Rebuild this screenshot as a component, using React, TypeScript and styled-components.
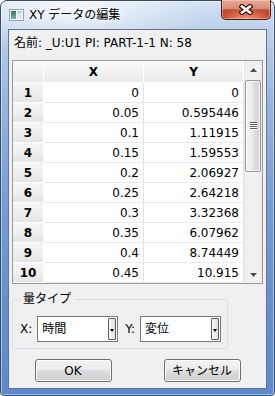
import { Fragment } from "react";
import styled, { createGlobalStyle } from "styled-components";

const UI_FONT = `"DejaVu Sans", "Noto Sans CJK JP", sans-serif`;

const GlobalStyle = createGlobalStyle`
  html, body {
    margin: 0;
    padding: 0;
  }
  body {
    width: 275px;
    height: 396px;
    overflow: hidden;
    background: #ffffff;
    font-family: ${UI_FONT};
    font-size: 12px;
    color: #000;
  }
`;

type Row = { no: string; x: string; y: string };

const rows: Row[] = [
  { no: "1", x: "0", y: "0" },
  { no: "2", x: "0.05", y: "0.595446" },
  { no: "3", x: "0.1", y: "1.11915" },
  { no: "4", x: "0.15", y: "1.59553" },
  { no: "5", x: "0.2", y: "2.06927" },
  { no: "6", x: "0.25", y: "2.64218" },
  { no: "7", x: "0.3", y: "3.32368" },
  { no: "8", x: "0.35", y: "6.07962" },
  { no: "9", x: "0.4", y: "8.74449" },
  { no: "10", x: "0.45", y: "10.915" }
];

const Window = styled.div`
  box-sizing: border-box;
  width: 275px;
  height: 396px;
  display: flex;
  flex-direction: column;
  padding: 0 7px 6px 7px;
  border: 1px solid #3b4b62;
  border-radius: 7px 7px 4px 4px;
  background:
    radial-gradient(ellipse 190px 60px at 70px 8px, rgba(255, 255, 255, 0.8), rgba(255, 255, 255, 0) 70%),
    linear-gradient(to bottom, #d3e2f4 0px, #bcd1ec 28px, #9ab9e3 90px, #7aa2da 180px, #6592d4 280px, #5b89d0 396px);
  box-shadow: inset 0 0 0 1px rgba(255, 255, 255, 0.45);
`;

const TitleBar = styled.div`
  height: 28px;
  display: flex;
  align-items: flex-start;
`;

const TitleIcon = styled.svg`
  margin: 8px 0 0 1px;
  flex: none;
`;

const TitleText = styled.span`
  margin: 6px 0 0 5px;
  line-height: 16px;
  font-size: 12px;
  color: #000;
  white-space: nowrap;
  text-shadow: 0 0 6px rgba(255, 255, 255, 0.95), 0 0 3px rgba(255, 255, 255, 0.9);
`;

const CloseButton = styled.div`
  box-sizing: border-box;
  margin: -1px -4px 0 auto;
  width: 50px;
  height: 20px;
  display: flex;
  align-items: center;
  justify-content: center;
  border: 1px solid #4a1c14;
  border-top: none;
  border-radius: 0 0 5px 5px;
  background:
    radial-gradient(ellipse 60% 55% at 50% 100%, rgba(255, 170, 130, 0.85), rgba(255, 170, 130, 0) 100%),
    linear-gradient(to bottom, #e6aa9c 0%, #d98b79 45%, #c54a33 52%, #b6361f 100%);
  box-shadow: inset 0 0 0 1px rgba(255, 215, 200, 0.45);
`;

const Client = styled.div`
  flex: 1;
  display: flex;
  flex-direction: column;
  padding: 0 3px;
  background: #f0f0f0;
  border: 1px solid rgba(30, 48, 78, 0.65);
`;

const NameRow = styled.div`
  box-sizing: border-box;
  height: 30px;
  padding: 0 0 4px 2px;
  display: flex;
  align-items: center;
  line-height: 16px;
  white-space: nowrap;
`;

const Table = styled.div`
  box-sizing: border-box;
  height: 224px;
  display: flex;
  border: 1px solid #9a9a9a;
  background: #ffffff;
  overflow: hidden;
`;

const Grid = styled.div`
  flex: 1;
  display: grid;
  grid-template-columns: 31px 100px 100px;
  grid-template-rows: 22px;
  grid-auto-rows: 20px;
  align-content: start;
  overflow: hidden;
`;

const HeadCell = styled.div`
  box-sizing: border-box;
  display: flex;
  align-items: center;
  justify-content: center;
  font-weight: bold;
  border-right: 1px solid #ffffff;
  border-bottom: 1px solid #ffffff;
  background: linear-gradient(to bottom, #fbfbfb 0%, #f1f1f1 55%, #e9e9e9 100%);
`;

const RowHead = styled.div`
  box-sizing: border-box;
  display: flex;
  align-items: center;
  justify-content: center;
  font-weight: bold;
  border-right: 1px solid #ffffff;
  border-bottom: 1px solid #ffffff;
  background: linear-gradient(to bottom, #f6f6f6 0%, #eeeeee 55%, #e4e4e4 100%);
`;

const DataCell = styled.div`
  box-sizing: border-box;
  display: flex;
  align-items: center;
  justify-content: flex-end;
  padding-right: 4px;
  border-right: 1px solid #e3e3e3;
  border-bottom: 1px solid #e8e8e8;
`;

const ScrollBar = styled.div`
  width: 18px;
  flex: none;
  display: flex;
  flex-direction: column;
  background: linear-gradient(to right, #e6e6e6 0px, #f1f1f1 2px, #f1f1f1 15px, #e9e9e9 18px);
`;

const ScrollArrow = styled.div`
  height: 17px;
  flex: none;
  display: flex;
  align-items: center;
  justify-content: center;
`;

const ScrollTrack = styled.div`
  flex: 1;
  display: flex;
  flex-direction: column;
`;

const Thumb = styled.div<{ $offset: number; $size: number }>`
  box-sizing: border-box;
  margin: ${(p) => p.$offset}px 1px 0 1px;
  height: ${(p) => p.$size}px;
  display: flex;
  align-items: center;
  justify-content: center;
  border: 1px solid #979797;
  border-radius: 2px;
  background: linear-gradient(to right, #f4f4f4 0%, #ececec 45%, #dedede 55%, #d2d2d2 100%);
  box-shadow: inset 0 0 0 1px rgba(255, 255, 255, 0.7);
`;

const GroupBox = styled.fieldset`
  box-sizing: border-box;
  width: 216px;
  margin: 8px 0 0 0;
  padding: 10px 4px 6px 7px;
  min-inline-size: 0;
  border: 1px solid #d5dfe5;
  border-radius: 3px;
`;

const GroupTitle = styled.legend`
  padding: 0 3px;
  line-height: 14px;
  font-size: 12px;
`;

const FieldRow = styled.div`
  display: flex;
  align-items: center;
  gap: 7px;
`;

const Field = styled.label`
  display: flex;
  align-items: center;
`;

const FieldLabel = styled.span`
  margin-right: 5px;
  line-height: 16px;
`;

const Combo = styled.div`
  box-sizing: border-box;
  width: 81px;
  height: 26px;
  display: flex;
  align-items: center;
  padding: 1px 1px 1px 4px;
  border: 1px solid #7a7a7a;
  background: #ffffff;
`;

const ComboText = styled.span`
  flex: 1;
  line-height: 16px;
`;

const DropButton = styled.div`
  box-sizing: border-box;
  width: 8px;
  height: 22px;
  display: flex;
  align-items: center;
  justify-content: center;
  padding-top: 2px;
  border: 1px solid #5c5c5c;
  border-radius: 1px;
  background: linear-gradient(to right, #fafafa, #dedede);
`;

const DropArrow = styled.span`
  width: 0;
  height: 0;
  border-left: 2.5px solid transparent;
  border-right: 2.5px solid transparent;
  border-top: 3px solid #000;
`;

const ButtonRow = styled.div`
  margin-top: 10px;
  display: flex;
  justify-content: center;
  gap: 52px;
`;

const PushButton = styled.button`
  box-sizing: border-box;
  width: 77px;
  height: 23px;
  padding: 0;
  border: 1px solid #707070;
  border-radius: 3px;
  background: linear-gradient(to bottom, #f2f2f2 0%, #ebebeb 50%, #dddddd 50%, #cfcfcf 100%);
  box-shadow: inset 0 0 0 1px #fcfcfc;
  font-family: ${UI_FONT};
  font-size: 12px;
  line-height: 16px;
  color: #000;
`;

function AppIcon() {
  return (
    <TitleIcon width="15" height="12" viewBox="0 0 15 12">
      <defs>
        <linearGradient id="ic" x1="0" y1="0" x2="0" y2="1">
          <stop offset="0" stopColor="#2a7a60" />
          <stop offset="1" stopColor="#79b9a0" />
        </linearGradient>
      </defs>
      <rect x="0.5" y="0.5" width="14" height="11" fill="#f3f6f7" stroke="#97a4aa" />
      <rect x="2" y="2" width="5" height="8" fill="url(#ic)" />
      <rect x="8" y="2" width="5" height="8" fill="#dde8ee" />
      <rect x="8" y="2" width="5" height="2" fill="#b9cfdc" />
    </TitleIcon>
  );
}

function CloseGlyph() {
  return (
    <svg width="14" height="11" viewBox="0 0 14 11">
      <path d="M3 2.5 L11 8.5 M11 2.5 L3 8.5" stroke="#3a1510" strokeWidth="5" strokeLinecap="square" />
      <path d="M3 2.5 L11 8.5 M11 2.5 L3 8.5" stroke="#ffffff" strokeWidth="2.6" strokeLinecap="square" />
    </svg>
  );
}

function ArrowGlyph({ dir }: { dir: "up" | "down" }) {
  return (
    <svg width="7" height="4" viewBox="0 0 7 4">
      <path d={dir === "up" ? "M0 4 L3.5 0 L7 4 Z" : "M0 0 L3.5 4 L7 0 Z"} fill="#505050" />
    </svg>
  );
}

function GripGlyph() {
  return (
    <svg width="7" height="8" viewBox="0 0 7 8">
      {[0, 2, 4, 6].map((y) => (
        <g key={y}>
          <rect x="0" y={y} width="7" height="1" fill="#5a5a5a" />
          <rect x="0" y={y + 1} width="7" height="1" fill="#ffffff" />
        </g>
      ))}
    </svg>
  );
}

export default function App() {
  return (
    <>
      <GlobalStyle />
      <Window>
        <TitleBar>
          <AppIcon />
          <TitleText>XY データの編集</TitleText>
          <CloseButton>
            <CloseGlyph />
          </CloseButton>
        </TitleBar>
        <Client>
          <NameRow>名前: _U:U1 PI: PART-1-1 N: 58</NameRow>
          <Table>
            <Grid>
              <HeadCell />
              <HeadCell>X</HeadCell>
              <HeadCell>Y</HeadCell>
              {rows.map((r) => (
                <Fragment key={r.no}>
                  <RowHead>{r.no}</RowHead>
                  <DataCell>{r.x}</DataCell>
                  <DataCell>{r.y}</DataCell>
                </Fragment>
              ))}
            </Grid>
            <ScrollBar>
              <ScrollArrow>
                <ArrowGlyph dir="up" />
              </ScrollArrow>
              <ScrollTrack>
                <Thumb $offset={2} $size={92}>
                  <GripGlyph />
                </Thumb>
              </ScrollTrack>
              <ScrollArrow>
                <ArrowGlyph dir="down" />
              </ScrollArrow>
            </ScrollBar>
          </Table>
          <GroupBox>
            <GroupTitle>量タイプ</GroupTitle>
            <FieldRow>
              <Field>
                <FieldLabel>X:</FieldLabel>
                <Combo>
                  <ComboText>時間</ComboText>
                  <DropButton>
                    <DropArrow />
                  </DropButton>
                </Combo>
              </Field>
              <Field>
                <FieldLabel>Y:</FieldLabel>
                <Combo>
                  <ComboText>変位</ComboText>
                  <DropButton>
                    <DropArrow />
                  </DropButton>
                </Combo>
              </Field>
            </FieldRow>
          </GroupBox>
          <ButtonRow>
            <PushButton>OK</PushButton>
            <PushButton>キャンセル</PushButton>
          </ButtonRow>
        </Client>
      </Window>
    </>
  );
}
